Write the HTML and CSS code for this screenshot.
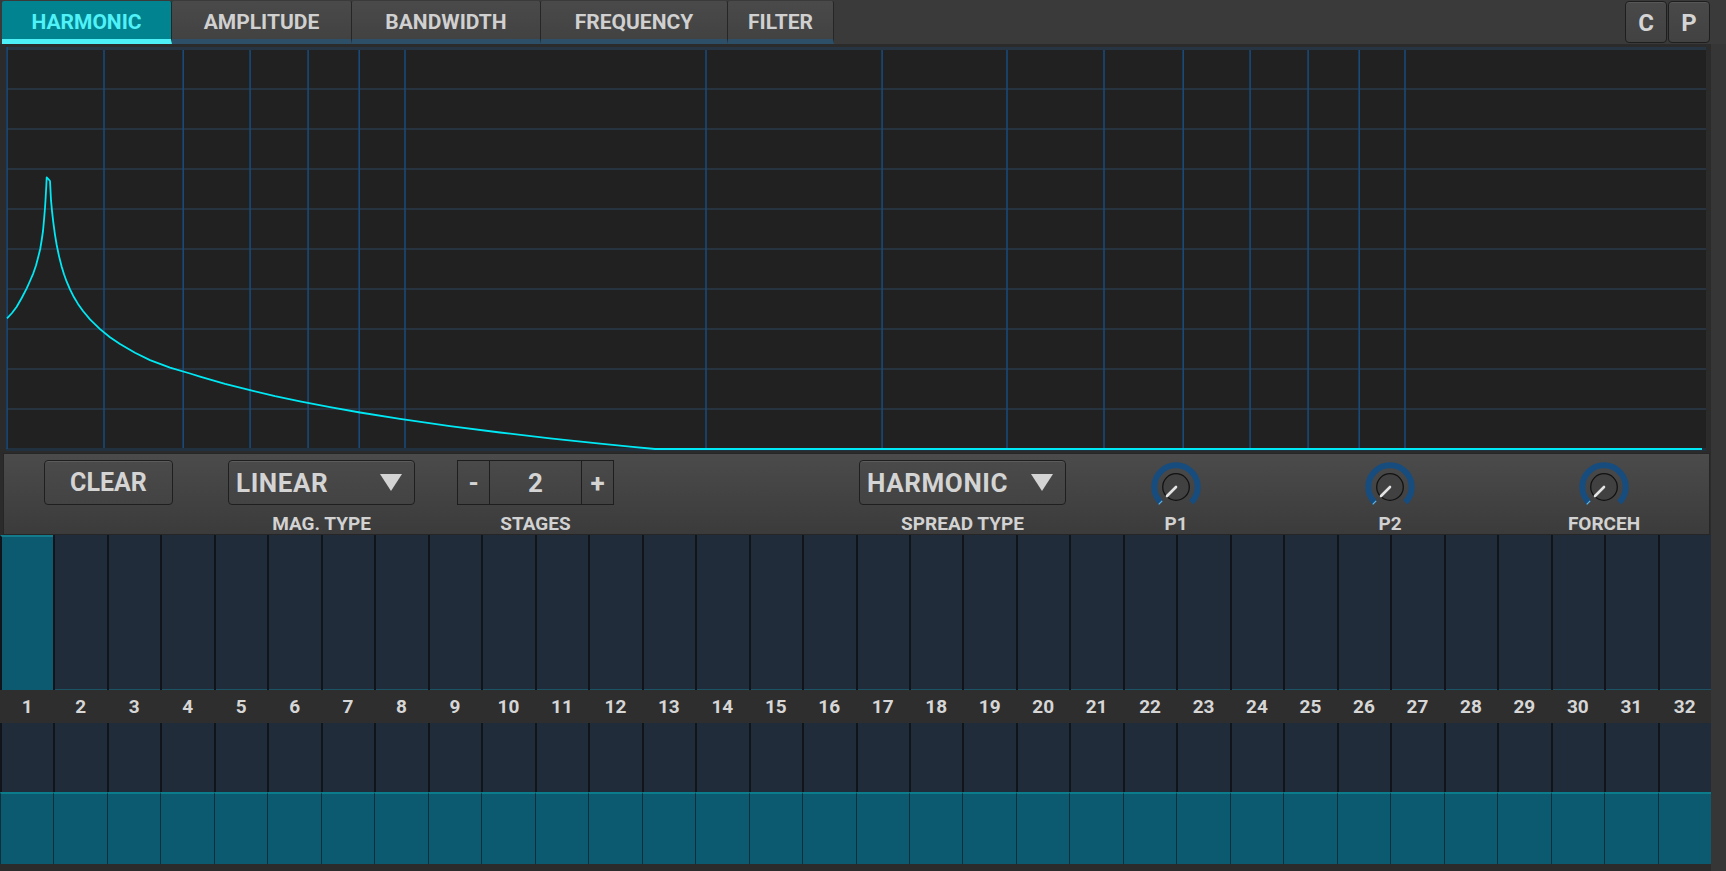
FILE: index.html
```html
<!DOCTYPE html>
<html>
<head>
<meta charset="utf-8">
<title>Harmonic</title>
<link rel="stylesheet" href="styles.css">
</head>
<body>
<div class="app">
  <header class="topbar">
    <nav class="tabs">
      <div class="tab active t1">HARMONIC</div>
      <div class="tab t2">AMPLITUDE</div>
      <div class="tab t3">BANDWIDTH</div>
      <div class="tab t4">FREQUENCY</div>
      <div class="tab t5">FILTER</div>
    </nav>
    <div class="cp">
      <div class="cpbtn">C</div>
      <div class="cpbtn">P</div>
    </div>
  </header>
  <div class="main">
    <main class="content">
      <svg class="graph" width="1711" height="409" viewBox="0 44 1711 409">
        <rect x="6" y="47" width="1700" height="404" fill="#212121"/>
        <g stroke="#27343f" stroke-width="2">
          <line x1="7" y1="89" x2="1706" y2="89"/>
          <line x1="7" y1="129" x2="1706" y2="129"/>
          <line x1="7" y1="169" x2="1706" y2="169"/>
          <line x1="7" y1="209" x2="1706" y2="209"/>
          <line x1="7" y1="249" x2="1706" y2="249"/>
          <line x1="7" y1="289" x2="1706" y2="289"/>
          <line x1="7" y1="329" x2="1706" y2="329"/>
          <line x1="7" y1="369" x2="1706" y2="369"/>
          <line x1="7" y1="409" x2="1706" y2="409"/>
        </g>
        <rect x="7" y="47" width="1699" height="3" fill="#263541"/>
        <rect x="6" y="448" width="1700" height="3" fill="#223140"/>
        <g stroke="#184a7a" stroke-width="1.6">
          <line x1="7.1" y1="47" x2="7.1" y2="449"/>
          <line x1="104" y1="50" x2="104" y2="448"/>
          <line x1="183.2" y1="50" x2="183.2" y2="448"/>
          <line x1="250.1" y1="50" x2="250.1" y2="448"/>
          <line x1="308.1" y1="50" x2="308.1" y2="448"/>
          <line x1="359.2" y1="50" x2="359.2" y2="448"/>
          <line x1="405" y1="50" x2="405" y2="448"/>
          <line x1="706" y1="50" x2="706" y2="448"/>
          <line x1="882.1" y1="50" x2="882.1" y2="448"/>
          <line x1="1007" y1="50" x2="1007" y2="448"/>
          <line x1="1104" y1="50" x2="1104" y2="448"/>
          <line x1="1183.2" y1="50" x2="1183.2" y2="448"/>
          <line x1="1250.1" y1="50" x2="1250.1" y2="448"/>
          <line x1="1308.1" y1="50" x2="1308.1" y2="448"/>
          <line x1="1359.2" y1="50" x2="1359.2" y2="448"/>
          <line x1="1405" y1="50" x2="1405" y2="448"/>
        </g>
        <polyline fill="none" stroke="#00e8f4" stroke-width="1.8" stroke-linejoin="round"
          points="7,318.3 12,313 16.7,306.7 21.7,298 26.7,288.3 30,281 33.3,273.3 36,265.5 38.3,256.7 40.2,249 41.7,240 43,231 44,220 45,208 45.7,196.7 46.3,186 46.7,177.3 48.3,179 50,181 51,200.2 52,210.8 53.3,222.3 55,234.8 56.7,245 59,256.1 61.7,266.7 64,274.2 66.7,281.7 70,289.4 74,297.3 78,303.9 83,311 90,319.4 100,329.1 110,337.2 120,344 135,352.7 150,360.1 170,367.6 190,373.5 200,376.6 225,383.8 250,390.2 275,396.1 300,401.4 330,407.2 360,412.5 400,418.9 450,426.1 500,432.5 550,438.3 600,443.65 630,446.6 655,449 1702,449"/>
      </svg>

      <section class="panel">
        <div class="ctl w-clear">
          <div class="btn center">CLEAR</div>
        </div>
        <div class="ctl w-mag">
          <div class="btn dd"><span>LINEAR</span><svg width="22" height="17" viewBox="0 0 22 17"><polygon points="0,0 22,0 11,17" fill="#d4d4d4"/></svg></div>
          <div class="label">MAG. TYPE</div>
        </div>
        <div class="ctl w-stage">
          <div class="stage">
            <div class="cell pm">-</div>
            <div class="cell val">2</div>
            <div class="cell pm">+</div>
          </div>
          <div class="label">STAGES</div>
        </div>
        <div class="ctl w-spread">
          <div class="btn dd"><span>HARMONIC</span><svg width="22" height="17" viewBox="0 0 22 17"><polygon points="0,0 22,0 11,17" fill="#d4d4d4"/></svg></div>
          <div class="label">SPREAD TYPE</div>
        </div>
        <div class="ctl w-knob first-knob">
          <svg class="knob" width="60" height="45" viewBox="0 0 60 45">
            <path d="M14.66 42.34 A21.7 21.7 0 1 1 45.34 42.34" fill="none" stroke="#174c7e" stroke-width="6"/>
            <line x1="16.2" y1="40.8" x2="12.7" y2="44.3" stroke="#5fb6e6" stroke-width="1.2"/>
            <circle cx="30" cy="27" r="13.3" fill="#414141" stroke="#121212" stroke-width="1.3"/>
            <line x1="30" y1="27" x2="21" y2="36" stroke="#e4e4e4" stroke-width="2.6" stroke-linecap="round"/>
          </svg>
          <div class="label">P1</div>
        </div>
        <div class="ctl w-knob">
          <svg class="knob" width="60" height="45" viewBox="0 0 60 45">
            <path d="M14.66 42.34 A21.7 21.7 0 1 1 45.34 42.34" fill="none" stroke="#174c7e" stroke-width="6"/>
            <line x1="16.2" y1="40.8" x2="12.7" y2="44.3" stroke="#5fb6e6" stroke-width="1.2"/>
            <circle cx="30" cy="27" r="13.3" fill="#414141" stroke="#121212" stroke-width="1.3"/>
            <line x1="30" y1="27" x2="21" y2="36" stroke="#e4e4e4" stroke-width="2.6" stroke-linecap="round"/>
          </svg>
          <div class="label">P2</div>
        </div>
        <div class="ctl w-knob">
          <svg class="knob" width="60" height="45" viewBox="0 0 60 45">
            <path d="M14.66 42.34 A21.7 21.7 0 1 1 45.34 42.34" fill="none" stroke="#174c7e" stroke-width="6"/>
            <line x1="16.2" y1="40.8" x2="12.7" y2="44.3" stroke="#5fb6e6" stroke-width="1.2"/>
            <circle cx="30" cy="27" r="13.3" fill="#414141" stroke="#121212" stroke-width="1.3"/>
            <line x1="30" y1="27" x2="21" y2="36" stroke="#e4e4e4" stroke-width="2.6" stroke-linecap="round"/>
          </svg>
          <div class="label">FORCEH</div>
        </div>
      </section>

      <div class="bars top">
        <div class="hb on"></div><div class="hb"></div><div class="hb"></div><div class="hb"></div>
        <div class="hb"></div><div class="hb"></div><div class="hb"></div><div class="hb"></div>
        <div class="hb"></div><div class="hb"></div><div class="hb"></div><div class="hb"></div>
        <div class="hb"></div><div class="hb"></div><div class="hb"></div><div class="hb"></div>
        <div class="hb"></div><div class="hb"></div><div class="hb"></div><div class="hb"></div>
        <div class="hb"></div><div class="hb"></div><div class="hb"></div><div class="hb"></div>
        <div class="hb"></div><div class="hb"></div><div class="hb"></div><div class="hb"></div>
        <div class="hb"></div><div class="hb"></div><div class="hb"></div><div class="hb"></div>
      </div>
      <div class="nums">
        <div>1</div><div>2</div><div>3</div><div>4</div><div>5</div><div>6</div><div>7</div><div>8</div>
        <div>9</div><div>10</div><div>11</div><div>12</div><div>13</div><div>14</div><div>15</div><div>16</div>
        <div>17</div><div>18</div><div>19</div><div>20</div><div>21</div><div>22</div><div>23</div><div>24</div>
        <div>25</div><div>26</div><div>27</div><div>28</div><div>29</div><div>30</div><div>31</div><div>32</div>
      </div>
      <div class="bars bottom">
        <div class="bb"><div class="dk"></div><div class="fl"></div></div><div class="bb"><div class="dk"></div><div class="fl"></div></div>
        <div class="bb"><div class="dk"></div><div class="fl"></div></div><div class="bb"><div class="dk"></div><div class="fl"></div></div>
        <div class="bb"><div class="dk"></div><div class="fl"></div></div><div class="bb"><div class="dk"></div><div class="fl"></div></div>
        <div class="bb"><div class="dk"></div><div class="fl"></div></div><div class="bb"><div class="dk"></div><div class="fl"></div></div>
        <div class="bb"><div class="dk"></div><div class="fl"></div></div><div class="bb"><div class="dk"></div><div class="fl"></div></div>
        <div class="bb"><div class="dk"></div><div class="fl"></div></div><div class="bb"><div class="dk"></div><div class="fl"></div></div>
        <div class="bb"><div class="dk"></div><div class="fl"></div></div><div class="bb"><div class="dk"></div><div class="fl"></div></div>
        <div class="bb"><div class="dk"></div><div class="fl"></div></div><div class="bb"><div class="dk"></div><div class="fl"></div></div>
        <div class="bb"><div class="dk"></div><div class="fl"></div></div><div class="bb"><div class="dk"></div><div class="fl"></div></div>
        <div class="bb"><div class="dk"></div><div class="fl"></div></div><div class="bb"><div class="dk"></div><div class="fl"></div></div>
        <div class="bb"><div class="dk"></div><div class="fl"></div></div><div class="bb"><div class="dk"></div><div class="fl"></div></div>
        <div class="bb"><div class="dk"></div><div class="fl"></div></div><div class="bb"><div class="dk"></div><div class="fl"></div></div>
        <div class="bb"><div class="dk"></div><div class="fl"></div></div><div class="bb"><div class="dk"></div><div class="fl"></div></div>
        <div class="bb"><div class="dk"></div><div class="fl"></div></div><div class="bb"><div class="dk"></div><div class="fl"></div></div>
        <div class="bb"><div class="dk"></div><div class="fl"></div></div><div class="bb"><div class="dk"></div><div class="fl"></div></div>
        <div class="bb"><div class="dk"></div><div class="fl"></div></div><div class="bb"><div class="dk"></div><div class="fl"></div></div>
      </div>
    </main>
    <aside class="strip"></aside>
  </div>
</div>
</body>
</html>
```

FILE: styles.css
```css
* { box-sizing: border-box; }
html, body {
  margin: 0;
  padding: 0;
  width: 1726px;
  height: 871px;
  overflow: hidden;
  background: #2b2b2b;
  font-family: Roboto, "Liberation Sans", sans-serif;
}
.app {
  display: flex;
  flex-direction: column;
  width: 1726px;
  height: 871px;
}

/* top bar */
.topbar {
  display: flex;
  align-items: flex-start;
  height: 44px;
  padding: 1px 0 0 2px;
  background: #3a3a3a;
}
.tabs { display: flex; }
.tab {
  height: 43px;
  padding-top: 4px;
  line-height: 34px;
  text-align: center;
  font-size: 21px;
  font-weight: 700;
  color: #d0d0d0;
  background: linear-gradient(#4a4a4a, #424242);
  border-right: 1px solid #262626;
  border-bottom: 5px solid #2d5068;
  border-radius: 2px 2px 0 0;
}
.tab.active {
  background: #01848f;
  color: #50f2f8;
  border-bottom-color: #4cf0f6;
}
.t1 { width: 170px; }
.t2 { width: 180px; }
.t3 { width: 189px; }
.t4 { width: 187px; }
.t5 { width: 106px; }

.cp {
  margin-left: auto;
  margin-right: 16px;
  display: flex;
  gap: 1px;
}
.cpbtn {
  width: 42px;
  height: 42px;
  padding-top: 2px;
  line-height: 38px;
  text-align: center;
  font-size: 24px;
  font-weight: 700;
  color: #d4d4d4;
  background: linear-gradient(#494949, #424242);
  border: 1px solid #1e1e1e;
  border-radius: 4px;
  box-shadow: inset 0 1px 0 #575757;
}

/* main area */
.main {
  display: flex;
  flex: 1;
}
.content {
  width: 1711px;
  background: #2b2b2b;
  display: flex;
  flex-direction: column;
}
.strip {
  flex: 1;
  background: #363636;
}
.graph { display: block; }

/* control panel */
.panel {
  margin-left: 3px;
  width: 1707px;
  height: 82px;
  border: 1px solid #262626;
  background: linear-gradient(#4b4b4b, #3b3b3b);
  display: flex;
  align-items: flex-start;
  padding-top: 6px;
}
.ctl {
  display: flex;
  flex-direction: column;
  align-items: center;
}
.w-clear { margin-left: 40px; width: 129px; }
.w-mag { margin-left: 55px; width: 187px; }
.w-stage { margin-left: 42px; width: 157px; }
.w-spread { margin-left: 245px; width: 207px; }
.w-knob { margin-left: 114px; width: 100px; }
.w-knob.first-knob { margin-left: 60px; }

.btn {
  width: 100%;
  height: 45px;
  display: flex;
  align-items: center;
  border: 1px solid #1f1f1f;
  border-radius: 4px;
  background: linear-gradient(#4a4a4a, #434343);
  box-shadow: inset 0 1px 0 #5c5c5c;
  color: #d4d4d4;
  font-weight: 700;
}
.btn.center {
  justify-content: center;
  font-size: 25px;
}
.btn.dd {
  justify-content: space-between;
  padding: 0 12px 0 7px;
  font-size: 26px;
  letter-spacing: 0.6px;
}
.btn.dd svg { display: block; }

.stage {
  width: 100%;
  height: 45px;
  display: flex;
  border: 1px solid #1e1e1e;
}
.stage .cell {
  display: flex;
  align-items: center;
  justify-content: center;
  color: #d4d4d4;
  font-weight: 700;
  font-size: 26px;
}
.stage .pm { width: 31px; }
.stage .val {
  flex: 1;
  border-left: 1px solid #1e1e1e;
  border-right: 1px solid #1e1e1e;
}
.knob { display: block; }

.label {
  margin-top: 9px;
  line-height: 20px;
  font-size: 19px;
  font-weight: 700;
  color: #d2d2d2;
  white-space: nowrap;
}

/* harmonic bars */
.bars {
  display: grid;
  grid-template-columns: repeat(32, 1fr);
  width: 1711px;
}
.bars.top { height: 155px; }
.hb {
  background: #202c39;
  border-left: 2px solid #0f151b;
  box-shadow: inset 0 -1px 0 #1c5364;
}
.hb.on {
  background: #0b5a70;
  border-top: 2px solid #137b8b;
  box-shadow: none;
}
.nums {
  display: grid;
  grid-template-columns: repeat(32, 1fr);
  width: 1711px;
  height: 33px;
  background: #2e2e2e;
}
.nums div {
  padding-left: 1px;
  text-align: center;
  line-height: 33px;
  font-size: 19px;
  font-weight: 700;
  color: #d6d6d6;
}
.bars.bottom { height: 141px; }
.bb {
  display: flex;
  flex-direction: column;
}
.bb .dk {
  flex: 1;
  background: #202c39;
  border-left: 2px solid #0f151b;
}
.bb .fl {
  height: 72px;
  background: #0b5a70;
  border-top: 2px solid #0b7c8c;
  border-left: 1px solid #08303c;
}
```
